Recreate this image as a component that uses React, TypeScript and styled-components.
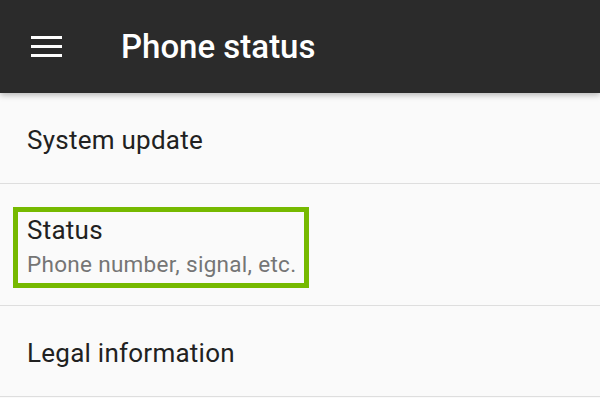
import styled, { createGlobalStyle } from "styled-components"

const GlobalStyle = createGlobalStyle`
  html, body {
    margin: 0;
    padding: 0;
    background: #fafafa;
    font-family: Roboto, "Noto Sans", sans-serif;
    -webkit-font-smoothing: antialiased;
  }
`;

const Screen = styled.div`
  width: 600px;
  height: 398px;
  overflow: hidden;
  background: #fafafa;
  display: flex;
  flex-direction: column;
`;

const Toolbar = styled.header`
  position: relative;
  z-index: 2;
  height: 93px;
  flex-shrink: 0;
  background: #2b2b2b;
  display: flex;
  align-items: center;
  padding-left: 31px;
  box-shadow: 0 2px 6px rgba(0, 0, 0, 0.28);
`;

const MenuButton = styled.div`
  width: 31px;
  height: 21px;
  display: flex;
  flex-direction: column;
  justify-content: space-between;
  margin-top: -1px;

  span {
    display: block;
    height: 3px;
    background: #fff;
  }
`;

const Title = styled.h1`
  margin: 0 0 0 59px;
  font-size: 33px;
  font-weight: 500;
  color: #fff;
  letter-spacing: 0;
`;

const List = styled.div`
  display: flex;
  flex-direction: column;
`;

const Row = styled.div<{ $height: number }>`
  height: ${p => p.$height}px;
  box-sizing: border-box;
  padding: 4px 27px 0;
  display: flex;
  align-items: center;
  border-bottom: 1px solid #dedede;
`;

const Highlight = styled.div`
  margin-left: -14px;
  margin-top: 2px;
  padding: 3px 8px 5px 9px;
  border: 5px solid #76b900;
`;

const Primary = styled.div`
  font-size: 26px;
  line-height: 30px;
  letter-spacing: 0.25px;
  color: #212121;
`;

const Secondary = styled.div`
  margin-top: 5px;
  font-size: 22.5px;
  line-height: 28px;
  letter-spacing: 0.3px;
  color: #757575;
`;

export default function App() {
  return (
    <>
      <GlobalStyle />
      <Screen>
        <Toolbar>
          <MenuButton>
            <span />
            <span />
            <span />
          </MenuButton>
          <Title>Phone status</Title>
        </Toolbar>
        <List>
          <Row $height={91}>
            <Primary>System update</Primary>
          </Row>
          <Row $height={122}>
            <Highlight>
              <Primary>Status</Primary>
              <Secondary>Phone number, signal, etc.</Secondary>
            </Highlight>
          </Row>
          <Row $height={91}>
            <Primary>Legal information</Primary>
          </Row>
        </List>
      </Screen>
    </>
  )
}
